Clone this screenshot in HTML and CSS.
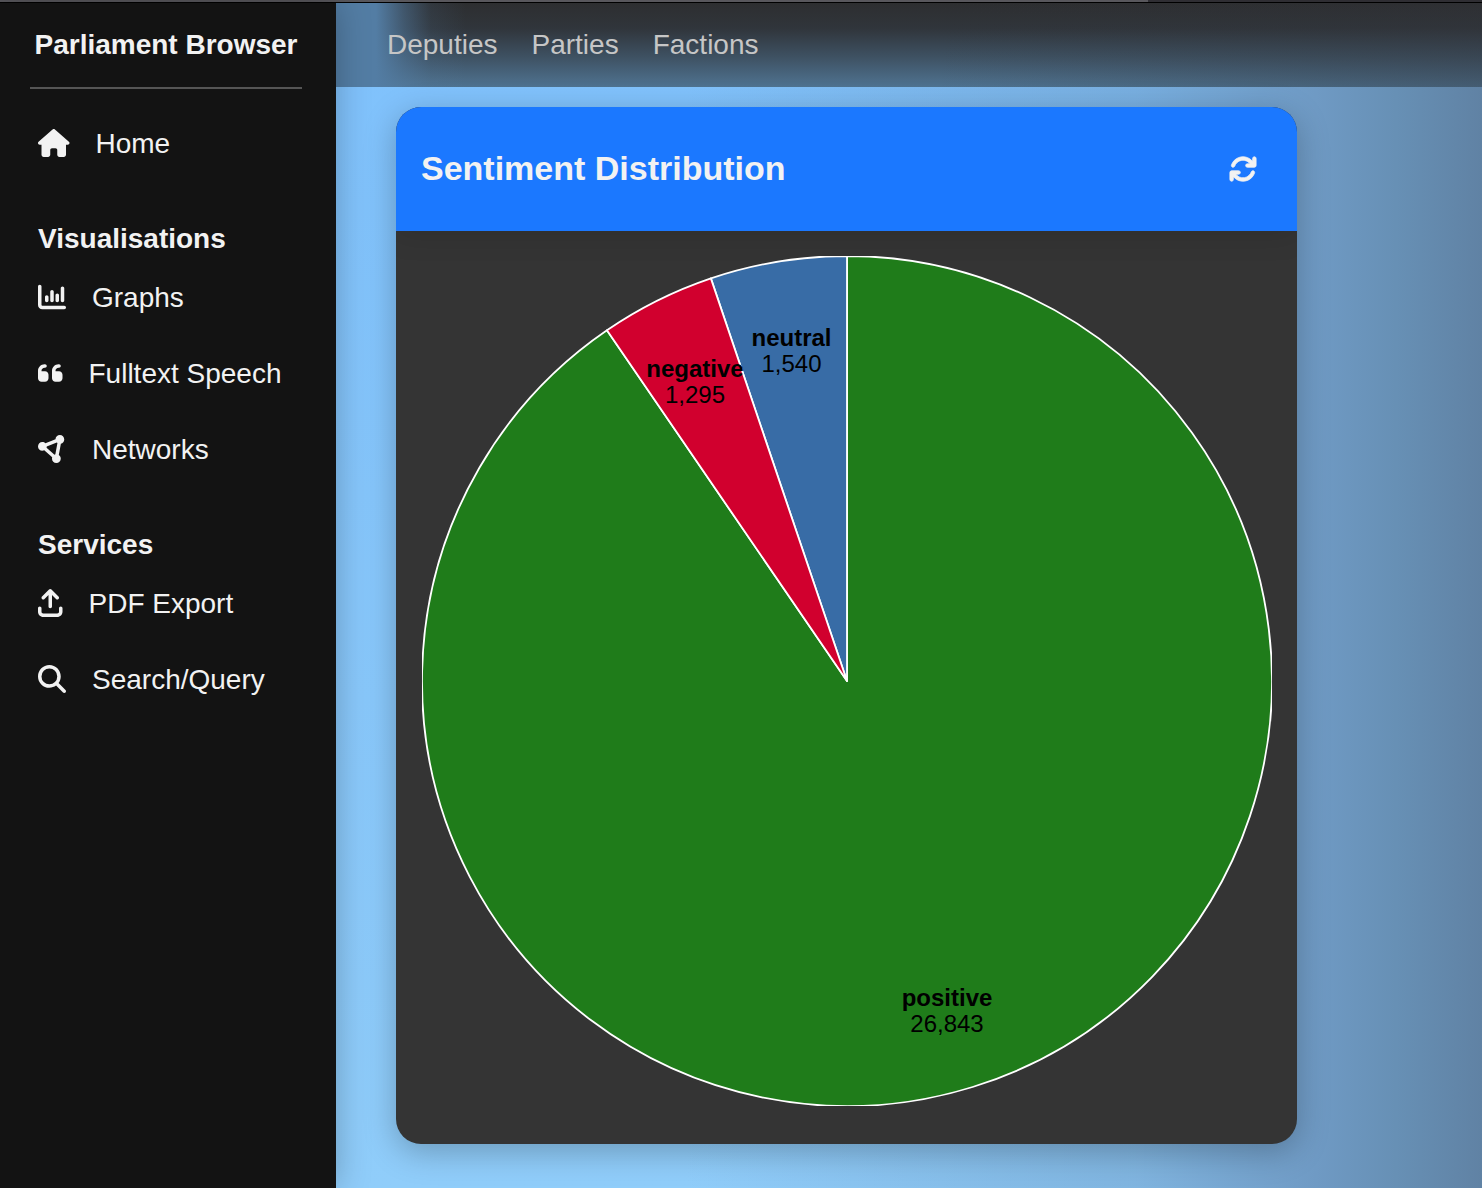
FILE: index.html
```html
<!DOCTYPE html>
<html lang="en">
<head>
<meta charset="utf-8">
<title>Parliament Browser</title>
<link rel="stylesheet" href="styles.css">
</head>
<body>
<div class="loading"><div class="loading-bar"></div></div>
<div class="app">
  <aside class="sidebar">
    <div class="brand">Parliament Browser</div>
    <hr class="divider">
    <nav class="menu">
      <a class="item"><svg class="icon icon-wide" viewBox="0 0 576 512"><path d="M575.8 255.5c0 18-15 32.1-32 32.1h-32l.7 160.2c0 2.7-.2 5.4-.5 8.1V472c0 22.1-17.9 40-40 40H456c-1.1 0-2.2 0-3.3-.1c-1.4 .1-2.8 .1-4.2 .1H416 392c-22.1 0-40-17.9-40-40V448 384c0-17.7-14.3-32-32-32H256c-17.7 0-32 14.3-32 32v64 24c0 22.1-17.9 40-40 40H160 128.1c-1.5 0-3-.1-4.5-.2c-1.2 .1-2.4 .2-3.6 .2H104c-22.1 0-40-17.9-40-40V360c0-.9 0-1.9 .1-2.8V287.6H32c-18 0-32-14-32-32.1c0-9 3-17 10-24L266.4 8c7-7 15-8 22-8s15 2 21 7L564.8 231.5c8 7 12 15 11 24z"/></svg>Home</a>
      <div class="heading">Visualisations</div>
      <a class="item"><svg class="icon" viewBox="0 0 512 512"><path d="M32 32c17.700 0 32 14.300 32 32V400c0 8.800 7.200 16 16 16H480c17.700 0 32 14.300 32 32s-14.300 32-32 32H80c-44.200 0-80-35.800-80-80V64C0 46.300 14.300 32 32 32zM160 224c17.700 0 32 14.300 32 32v64c0 17.700-14.300 32-32 32s-32-14.300-32-32V256c0-17.700 14.300-32 32-32zm128-64V320c0 17.700-14.300 32-32 32s-32-14.300-32-32V160c0-17.700 14.300-32 32-32s32 14.300 32 32zm64 32c17.700 0 32 14.300 32 32v96c0 17.700-14.300 32-32 32s-32-14.300-32-32V224c0-17.700 14.300-32 32-32zM480 96V320c0 17.700-14.300 32-32 32s-32-14.300-32-32V96c0-17.700 14.300-32 32-32s32 14.300 32 32z"/></svg>Graphs</a>
      <a class="item"><svg class="icon icon-narrow" viewBox="0 0 448 512"><path d="M0 216C0 149.700 53.700 96 120 96h8c17.700 0 32 14.300 32 32s-14.300 32-32 32h-8c-30.900 0-56 25.100-56 56v8h64c35.300 0 64 28.700 64 64v64c0 35.300-28.700 64-64 64H64c-35.300 0-64-28.700-64-64V320 288 216zm256 0c0-66.300 53.700-120 120-120h8c17.700 0 32 14.300 32 32s-14.300 32-32 32h-8c-30.900 0-56 25.100-56 56v8h64c35.300 0 64 28.700 64 64v64c0 35.300-28.700 64-64 64H320c-35.300 0-64-28.700-64-64V320 288 216z"/></svg>Fulltext Speech</a>
      <a class="item"><svg class="icon" viewBox="0 0 512 512"><path d="M418.4 157.9c35.3-8.3 61.6-40 61.6-77.900c0-44.200-35.800-80-80-80c-43.400 0-78.700 34.500-80 77.500L136.200 151.100C121.700 136.800 101.900 128 80 128c-44.200 0-80 35.800-80 80s35.800 80 80 80c12.200 0 23.800-2.700 34.100-7.600L259.700 407.800c-2.400 7.600-3.700 15.800-3.700 24.200c0 44.200 35.800 80 80 80s80-35.800 80-80c0-27.700-14-52.100-35.400-66.400l37.800-207.700zM156.300 232.200c2.200-6.900 3.500-14.200 3.700-21.700l183.800-73.500c3.600 3.500 7.400 6.700 11.600 9.500L317.600 354.100c-5.500 1.300-10.800 3.100-15.800 5.500L156.300 232.200z"/></svg>Networks</a>
      <div class="heading">Services</div>
      <a class="item"><svg class="icon icon-narrow" viewBox="0 0 448 512"><path d="M246.6 9.4c-12.5-12.5-32.8-12.5-45.3 0l-128 128c-12.5 12.5-12.5 32.800 0 45.300s32.800 12.500 45.300 0L192 109.300V320c0 17.700 14.300 32 32 32s32-14.300 32-32V109.300l73.400 73.400c12.500 12.500 32.800 12.500 45.300 0s12.500-32.800 0-45.300l-128-128zM64 352c0-17.700-14.300-32-32-32s-32 14.300-32 32v64c0 53 43 96 96 96H352c53 0 96-43 96-96V352c0-17.700-14.300-32-32-32s-32 14.300-32 32v64c0 17.700-14.300 32-32 32H96c-17.700 0-32-14.300-32-32V352z"/></svg>PDF Export</a>
      <a class="item"><svg class="icon" viewBox="0 0 512 512"><path d="M416 208c0 45.900-14.900 88.300-40 122.700L502.600 457.400c12.500 12.500 12.500 32.800 0 45.300s-32.800 12.500-45.300 0L330.700 376c-34.400 25.200-76.800 40-122.700 40C93.100 416 0 322.900 0 208S93.100 0 208 0S416 93.100 416 208zM208 352a144 144 0 1 0 0-288 144 144 0 1 0 0 288z"/></svg>Search/Query</a>
    </nav>
  </aside>
  <div class="page">
    <nav class="topbar"><a>Deputies</a><a>Parties</a><a>Factions</a></nav>
    <main class="content">
      <section class="card">
        <header class="card-header">
          <h1>Sentiment Distribution</h1>
          <svg class="icon" viewBox="0 0 512 512"><path stroke="#f2f2f2" stroke-width="14" d="M105.1 202.600c7.700-21.800 20.200-42.300 37.800-59.800c62.500-62.500 163.800-62.500 226.300 0L386.300 160H336c-17.700 0-32 14.300-32 32s14.300 32 32 32H463.900c17.700 0 32-14.300 32-32V64c0-17.700-14.300-32-32-32s-32 14.300-32 32v51.200L414.400 97.600c-87.500-87.500-229.300-87.500-316.800 0C73.200 122 55.600 150.700 44.800 181.400c-5.900 16.700 2.900 34.900 19.500 40.800s34.900-2.900 40.800-19.500zM39 289.300c-5 1.500-9.800 4.200-13.700 8.200c-4 4-6.700 8.800-8.100 14c-.3 1.200-.6 2.500-.8 3.800c-.3 1.700-.4 3.400-.4 5.100V448c0 17.700 14.300 32 32 32s32-14.300 32-32V396.900l17.600 17.500c87.500 87.400 229.300 87.400 316.700 0c24.400-24.400 42.100-53.100 52.900-83.700c5.900-16.700-2.900-34.900-19.500-40.800s-34.900 2.900-40.800 19.500c-7.700 21.800-20.200 42.300-37.800 59.800c-62.500 62.500-163.800 62.500-226.300 0l-.1-.1L125.600 352H176c17.700 0 32-14.300 32-32s-14.300-32-32-32H48.400c-1.600 0-3.200 .1-4.800 .3s-3.100 .5-4.600 1z"/><path d="M375 208L480 60V208ZM32 304H137L32 452Z"/></svg>
        </header>
        <div class="card-body">
          <svg class="pie" viewBox="-425 -425 850 850">
            <g class="slices">
              <path fill="#1f7c1a" d="M0 0V-425A425 425 0 1 1 -240.050 -350.720Z"/>
              <path fill="#386ca6" d="M0 0L-136.120 -402.610A425 425 0 0 1 0 -425Z"/>
              <path fill="#d1002e" d="M0 0L-240.050 -350.720A425 425 0 0 1 -136.120 -402.610Z"/>
            </g>
            <g class="labels">
              <text class="name" x="100" y="325">positive</text><text x="100" y="351">26,843</text>
              <text class="name" x="-55.500" y="-335">neutral</text><text x="-55.500" y="-309">1,540</text>
              <text class="name" x="-152" y="-304">negative</text><text x="-152" y="-278">1,295</text>
            </g>
          </svg>
        </div>
      </section>
    </main>
  </div>
</div>
</body>
</html>
```
FILE: styles.css
```css
* { box-sizing: border-box; }
body {
  margin: 0;
  height: 1188px;
  overflow: hidden;
  display: flex;
  flex-direction: column;
  font: 28px/32px "Liberation Sans", Arial, Helvetica, sans-serif;
  color: #f2f2f2;
}
.loading { height: 3px; background: #2f2e33; border-bottom: 1px solid #000; }
.loading-bar { width: 1148px; height: 2px; background: #58575c; }
.app { flex: 1; display: flex; }
.sidebar {
  width: 336px;
  background: #131313;
  box-shadow: 0 0 32px rgba(0, 0, 0, .25);
  z-index: 1;
}
.brand { height: 84px; padding: 26px 0 0 34.500px; font-weight: bold; white-space: nowrap; }
.divider { margin: 0 34px 0 30px; border: 0; height: 2px; background: #555; }
.menu { padding: 17px 0 0 38px; }
.item { display: flex; align-items: center; gap: 26px; height: 76px; white-space: nowrap; }
.item .icon { margin-top: -2px; }
.heading { height: 42px; margin-top: 36px; line-height: 42px; font-weight: bold; }
.icon { width: 28px; height: 28px; flex: none; fill: #f2f2f2; }
.icon-wide { width: 31.500px; }
.icon-narrow { width: 24.500px; }
.page {
  flex: 1;
  display: flex;
  flex-direction: column;
  background:
    linear-gradient(to right, rgba(113, 155, 196, 0) 350px, rgba(112, 156, 197, .5) 800px, #6f9ac4 980px, #6790b5 1060px, #6082a4 1146px),
    linear-gradient(to bottom, #7fc1fc, #90cdfa);
}
.topbar {
  display: flex;
  gap: 34px;
  height: 84px;
  padding: 26px 0 0 51px;
  color: #c6c6c6;
  background:
    linear-gradient(to right, #537da4 0, #537da4 40px, rgba(83, 125, 164, .5) 68px, rgba(83, 125, 164, .12) 95px, rgba(83, 125, 164, 0) 130px),
    linear-gradient(to right, rgba(48, 50, 56, 0) 600px, rgba(48, 50, 56, .35) 1146px),
    linear-gradient(to bottom, #2d2e30 0, #30353b 30%, #3e5162 64%, #4f7391 100%);
}
.content { padding: 20px 60px; }
.card {
  width: 901px;
  height: 1037px;
  border-radius: 25px;
  overflow: hidden;
  background: #343434;
  box-shadow: 0 8px 32px rgba(0, 0, 0, .25);
}
.card-header {
  display: flex;
  align-items: center;
  justify-content: space-between;
  height: 124px;
  padding: 0 40px 0 25px;
  background: #1b78ff;
  box-shadow: 0 0 30px rgba(0, 0, 0, .15);
}
h1 { margin: -2px 0 0; font-size: 34px; line-height: 40px; }
.card-body { padding: 25px 26px; }
.pie { display: block; width: 850px; height: 850px; }
.slices { stroke: #fff; stroke-width: 1.800; stroke-linejoin: round; }
.labels { font-size: 24px; text-anchor: middle; fill: #000; }
.name { font-weight: bold; }
```
